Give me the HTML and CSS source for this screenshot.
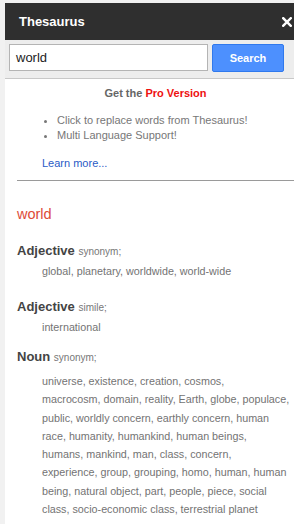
FILE: index.html
```html
<!DOCTYPE html>
<html>
<head>
<meta charset="utf-8">
<link rel="stylesheet" href="styles.css">
</head>
<body>
<div class="panel">
  <div class="header">
    <span class="title">Thesaurus</span>
    <svg class="close" width="10" height="10" viewBox="0 0 10 10"><path d="M1.2 1.2 L8.8 8.8 M8.8 1.2 L1.2 8.8" stroke="#fff" stroke-width="2.4" stroke-linecap="square"/></svg>
  </div>
  <div class="searchbar">
    <div class="input">world</div>
    <div class="button">Search</div>
  </div>
  <div class="content">
    <div class="promo">Get the <span class="pro">Pro Version</span></div>
    <ul class="features">
      <li>Click to replace words from Thesaurus!</li>
      <li>Multi Language Support!</li>
    </ul>
    <div class="learn">Learn more...</div>
    <div class="rule"></div>
    <div class="word">world</div>
    <div class="sense">
      <div class="pos">Adjective <span class="kind">synonym;</span></div>
      <div class="syn">global, planetary, worldwide, world-wide</div>
    </div>
    <div class="sense">
      <div class="pos">Adjective <span class="kind">simile;</span></div>
      <div class="syn">international</div>
    </div>
    <div class="sense sense-noun">
      <div class="pos">Noun <span class="kind">synonym;</span></div>
      <div class="syn syn-long">universe, existence, creation, cosmos,<br>macrocosm, domain, reality, Earth, globe, populace,<br>public, worldly concern, earthly concern, human<br>race, humanity, humankind, human beings,<br>humans, mankind, man, class, concern,<br>experience, group, grouping, homo, human, human<br>being, natural object, part, people, piece, social<br>class, socio-economic class, terrestrial planet</div>
    </div>
  </div>
</div>
</body>
</html>
```

FILE: styles.css
```css
html, body {
  margin: 0;
  padding: 0;
  background: #f1f1f1;
  overflow: hidden;
}
body {
  font-family: "Liberation Sans", Arial, sans-serif;
  width: 294px;
  height: 524px;
}
.panel {
  margin: 3px 0 0 5px;
  background: #fff;
  height: 521px;
  overflow: hidden;
}
.header {
  height: 37px;
  background: #2f2f2f;
  display: flex;
  align-items: center;
  justify-content: space-between;
  padding: 0 2px 0 14px;
}
.title {
  color: #fff;
  font-weight: bold;
  font-size: 13px;
}
.close {
  display: block;
}
.searchbar {
  background: #ededed;
  border-bottom: 1px solid #c8c8c8;
  display: flex;
  align-items: flex-start;
  gap: 4px;
  padding: 4px 0 6px 4px;
}
.input {
  box-sizing: border-box;
  width: 199px;
  height: 27px;
  border: 1px solid #b4b4b4;
  background: #fff;
  color: #222;
  font-size: 13px;
  line-height: 25px;
  padding-left: 6px;
}
.button {
  box-sizing: border-box;
  width: 72px;
  height: 28px;
  background: #4d90fe;
  border: 1px solid #3079ed;
  border-radius: 2px;
  color: #fff;
  font-weight: bold;
  font-size: 11px;
  line-height: 26px;
  text-align: center;
}
.content {
  padding: 7px 0 0 12px;
}
.promo {
  text-align: center;
  font-size: 11px;
  font-weight: bold;
  color: #666;
  line-height: 14px;
}
.pro {
  color: #ee1111;
}
.features {
  margin: 13px 0 0 0;
  padding-left: 40px;
  font-size: 11px;
  line-height: 15.4px;
  color: #777;
}
.learn {
  margin: 12.5px 0 0 25px;
  font-size: 11px;
  line-height: 15px;
  color: #2a5bc6;
}
.rule {
  margin-top: 8.5px;
  border-top: 1px solid #9a9a9a;
}
.word {
  margin-top: 23.5px;
  font-size: 14.5px;
  line-height: 20px;
  color: #dd4b39;
}
.sense {
  margin-top: 16.5px;
}
.sense-noun {
  margin-top: 11px;
}
.pos {
  font-size: 13px;
  font-weight: bold;
  color: #444;
  line-height: 20px;
}
.kind {
  font-size: 10px;
  font-weight: normal;
  color: #777;
}
.syn {
  margin-left: 25px;
  font-size: 10.75px;
  line-height: 18.3px;
  color: #737373;
  white-space: nowrap;
}
.syn-long {
  margin-top: 4px;
}
```
